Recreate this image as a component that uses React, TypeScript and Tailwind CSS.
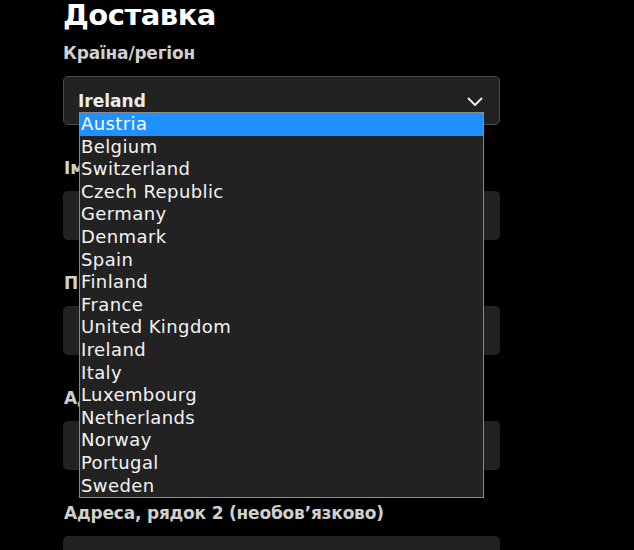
const countries = [
  'Austria',
  'Belgium',
  'Switzerland',
  'Czech Republic',
  'Germany',
  'Denmark',
  'Spain',
  'Finland',
  'France',
  'United Kingdom',
  'Ireland',
  'Italy',
  'Luxembourg',
  'Netherlands',
  'Norway',
  'Portugal',
  'Sweden',
];

const fields = ["Ім'я", 'Прізвище', 'Адреса', 'Адреса, рядок 2 (необов’язково)'];

function Chevron() {
  return (
    <svg width="16" height="10" viewBox="0 0 16 10" fill="none">
      <path d="M1.5 1.5L8 8L14.5 1.5" stroke="#f2f2f2" strokeWidth="1.8" strokeLinecap="round" strokeLinejoin="round" />
    </svg>
  );
}

function CountrySelect() {
  return (
    <div className="relative">
      <div className="flex h-[49px] items-center justify-between rounded-[5px] border border-[#4a4a4a] bg-[#222] pl-[14px] pr-[16px] pt-[2px]">
        <span className="text-[17px] font-bold text-[#ececec]">Ireland</span>
        <Chevron />
      </div>
      <ul className="absolute left-[16px] top-[36px] z-10 w-[405px] border border-[#8a8a8a] bg-[#222]">
        {countries.map((c, i) => (
          <li
            key={c}
            className={
              i === 0
                ? 'h-[22.6px] pl-[1px] text-[18px] leading-[22.6px] tracking-[0.4px] text-white bg-[#1e90ff]'
                : 'h-[22.6px] pl-[1px] text-[18px] leading-[22.6px] tracking-[0.4px] text-[#f4f4f4]'
            }
          >
            {c}
          </li>
        ))}
      </ul>
    </div>
  );
}

export default function App() {
  return (
    <div
      className="h-[550px] w-[634px] overflow-hidden bg-black"
      style={{ fontFamily: '"DejaVu Sans", sans-serif' }}
    >
      <div className="-mt-[3px] ml-[63px] w-[437px]">
        <h2 className="text-[29px] font-bold leading-[36px] tracking-[-0.5px] text-white">Доставка</h2>
        <div className="mt-[8px]">
          <label className="block text-[17px] font-semibold leading-6 tracking-[-0.2px] text-[#cfcfcf]">Країна/регіон</label>
          <div className="mt-[11px]">
            <CountrySelect />
          </div>
        </div>
        {fields.map((f) => (
          <div key={f} className="mt-[31px]">
            <label className="block pl-[1px] text-[17px] font-semibold leading-6 tracking-[-0.2px] text-[#cfcfcf]">{f}</label>
            <div className="mt-[11px] h-[49px] rounded-[5px] bg-[#222]" />
          </div>
        ))}
      </div>
    </div>
  );
}
